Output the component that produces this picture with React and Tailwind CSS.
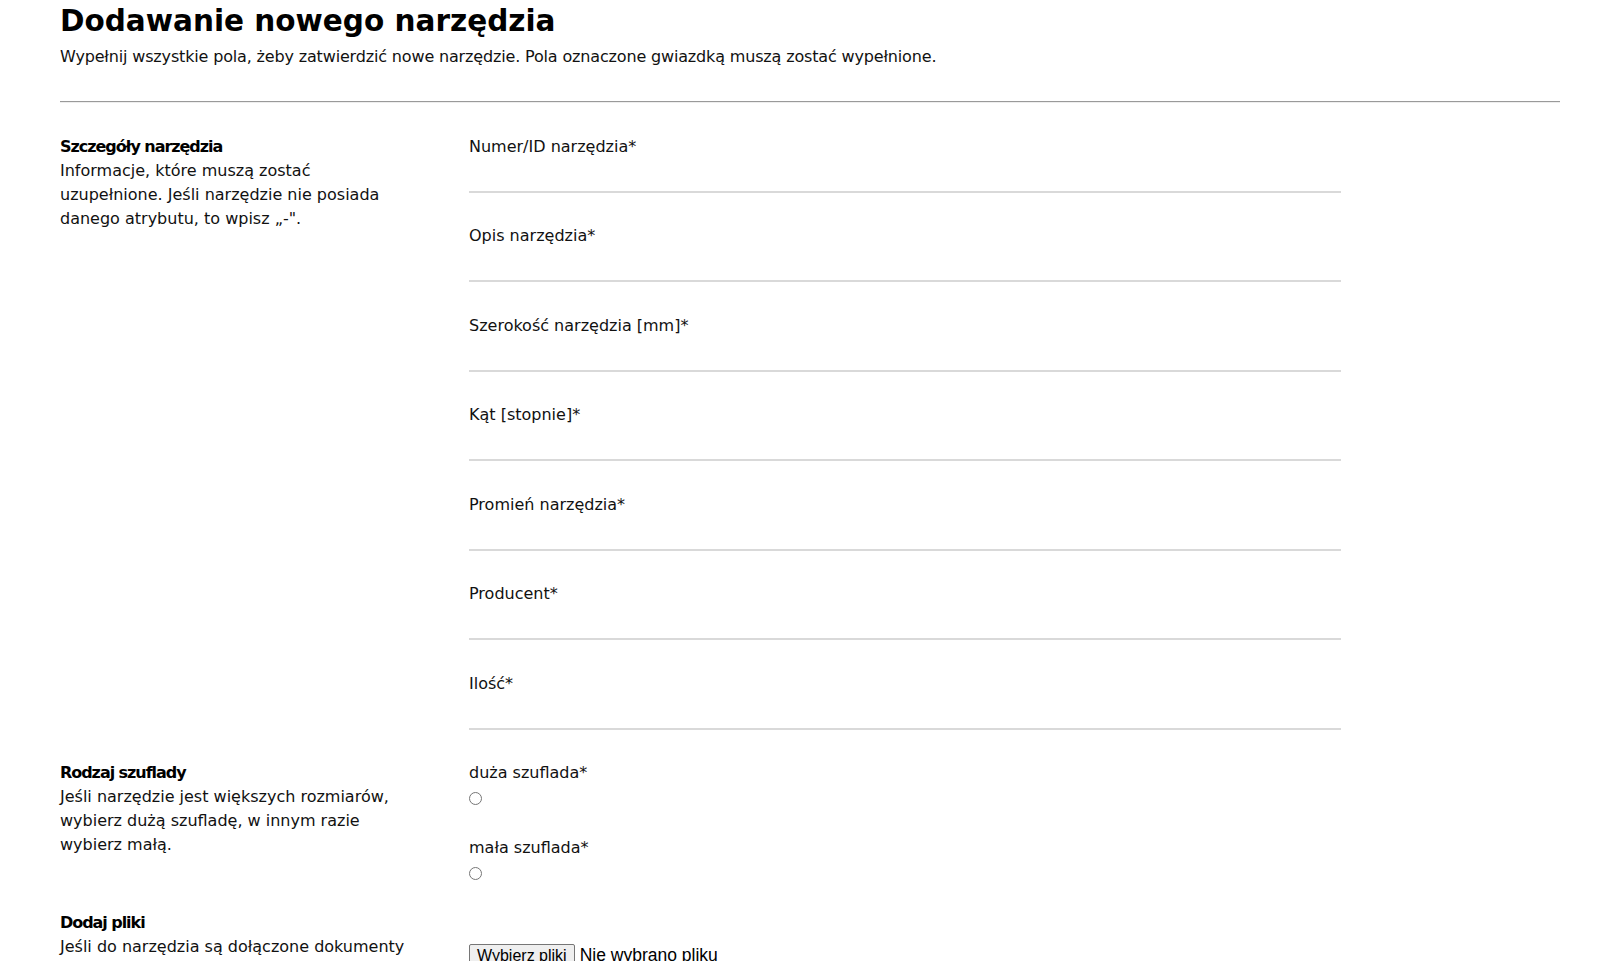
import React from "react";

const fields = [
  "Numer/ID narzędzia*",
  "Opis narzędzia*",
  "Szerokość narzędzia [mm]*",
  "Kąt [stopnie]*",
  "Promień narzędzia*",
  "Producent*",
  "Ilość*",
];

function Field({ label }) {
  return (
    <div className="mb-[31.5px]">
      <label className="block h-[24px] leading-[24px]">{label}</label>
      <div className="h-[34px] border-b-2 border-[#d9d9d9]"></div>
    </div>
  );
}

function SideInfo({ title, children }) {
  return (
    <div className="w-[409px] shrink-0">
      <p className="font-bold tracking-[-1.05px] leading-[24px] text-black">{title}</p>
      <p className="leading-[24px]">{children}</p>
    </div>
  );
}

function Radio({ label, name }) {
  return (
    <div>
      <label className="block h-[24px] leading-[24px]">{label}</label>
      <input
        type="radio"
        name={name}
        className="block m-0 mt-[7px] mb-[31px] w-[13px] h-[13px]"
      />
    </div>
  );
}

export default function App() {
  return (
    <div className="min-h-screen bg-white font-['DejaVu_Sans',sans-serif] text-[16px] text-[#111]">
      <div className="pl-[60px] pr-[64px]">
        <h1 className="mt-[3px] text-[29.5px] leading-[36px] font-bold text-black">
          Dodawanie nowego narzędzia
        </h1>
        <p className="mt-[6px] leading-[24px] tracking-[-0.16px]">
          Wypełnij wszystkie pola, żeby zatwierdzić nowe narzędzie. Pola oznaczone gwiazdką muszą zostać wypełnione.
        </p>
        <hr className="mt-[32px] border-0 border-t border-t-[#9a9a9a] border-b border-b-[#eeeeee]" />

        <div className="mt-[31.7px]">
          <div className="flex">
            <SideInfo title="Szczegóły narzędzia">
              Informacje, które muszą zostać
              <br />
              uzupełnione. Jeśli narzędzie nie posiada
              <br />
              danego atrybutu, to wpisz „-".
            </SideInfo>
            <div className="w-[872px]">
              {fields.map((f) => (
                <Field key={f} label={f} />
              ))}
            </div>
          </div>

          <div className="flex">
            <SideInfo title="Rodzaj szuflady">
              Jeśli narzędzie jest większych rozmiarów,
              <br />
              wybierz dużą szufladę, w innym razie
              <br />
              wybierz małą.
            </SideInfo>
            <div className="w-[872px]">
              <Radio label="duża szuflada*" name="szuflada" />
              <Radio label="mała szuflada*" name="szuflada" />
            </div>
          </div>

          <div className="flex">
            <SideInfo title="Dodaj pliki">
              Jeśli do narzędzia są dołączone dokumenty
            </SideInfo>
            <div className="w-[872px] pt-[33px]">
              <div className="flex items-center font-['Liberation_Sans',Arial,sans-serif] text-black">
                <span className="h-[23px] px-[7px] leading-[21px] text-[16px] bg-[#efefef] border border-[#767676] rounded-[2px]">
                  Wybierz pliki
                </span>
                <span className="ml-[5px] text-[17.5px] leading-[23px]">Nie wybrano pliku</span>
              </div>
            </div>
          </div>
        </div>
      </div>
    </div>
  );
}
